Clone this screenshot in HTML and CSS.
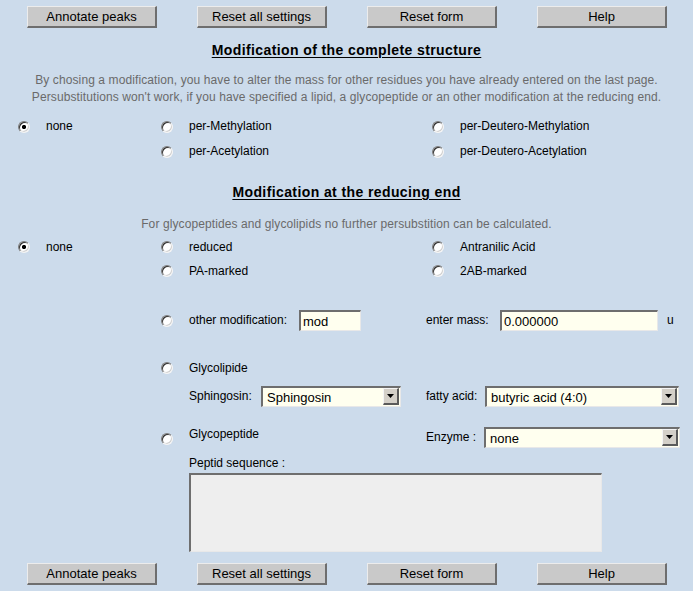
FILE: index.html
```html
<!DOCTYPE html>
<html>
<head>
<meta charset="utf-8">
<link rel="stylesheet" href="styles.css">
</head>
<body>
<div class="page">
  <div class="btnbar">
    <div class="cell"><button class="btn">Annotate peaks</button></div>
    <div class="cell"><button class="btn">Reset all settings</button></div>
    <div class="cell"><button class="btn">Reset form</button></div>
    <div class="cell"><button class="btn">Help</button></div>
  </div>

  <h2 class="title t1">Modification of the complete structure</h2>
  <p class="note n1">By chosing a modification, you have to alter the mass for other residues you have already entered on the last page.<br>Persubstitutions won't work, if you have specified a lipid, a glycopeptide or an other modification at the reducing end.</p>

  <div class="row r25 first1">
    <span class="rc"><input type="radio" name="pers" class="rad" checked></span>
    <span class="lb">none</span>
    <span class="rc"><input type="radio" name="pers" class="rad"></span>
    <span class="lb">per-Methylation</span>
    <span class="rc rc3"><input type="radio" name="pers" class="rad"></span>
    <span class="lb">per-Deutero-Methylation</span>
  </div>
  <div class="row r25">
    <span class="rc c3"><input type="radio" name="pers" class="rad"></span>
    <span class="lb">per-Acetylation</span>
    <span class="rc rc3"><input type="radio" name="pers" class="rad"></span>
    <span class="lb">per-Deutero-Acetylation</span>
  </div>

  <h2 class="title t2">Modification at the reducing end</h2>
  <p class="note n2">For glycopeptides and glycolipids no further persubstition can be calculated.</p>

  <div class="row r24 first2">
    <span class="rc"><input type="radio" name="red" class="rad" checked></span>
    <span class="lb">none</span>
    <span class="rc"><input type="radio" name="red" class="rad"></span>
    <span class="lb">reduced</span>
    <span class="rc rc3"><input type="radio" name="red" class="rad"></span>
    <span class="lb">Antranilic Acid</span>
  </div>
  <div class="row r24">
    <span class="rc c3"><input type="radio" name="red" class="rad"></span>
    <span class="lb">PA-marked</span>
    <span class="rc rc3"><input type="radio" name="red" class="rad"></span>
    <span class="lb">2AB-marked</span>
  </div>

  <div class="row rmod">
    <span class="rc c3"><input type="radio" name="red" class="rad"></span>
    <span class="lb fx"><span class="w-mod">other modification:</span><input class="txt in-mod" type="text" value="mod"></span>
    <span class="lb fx span2"><span class="w-mass">enter mass:</span><input class="txt in-mass" type="text" value="0.000000"><span class="unit">u</span></span>
  </div>

  <div class="row rlip">
    <span class="rc c3"><input type="radio" name="red" class="rad"></span>
    <span class="lb">Glycolipide</span>
  </div>

  <div class="row rsph">
    <span class="lb fx c4"><span class="w-sph">Sphingosin:</span>
      <span class="sel s-sph"><span class="selval">Sphingosin</span><span class="arrow"><svg width="7" height="4" viewBox="0 0 7 4"><path d="M0 0H7L3.5 4Z" fill="#000"/></svg></span></span>
    </span>
    <span class="lb fx span2"><span class="w-fat">fatty acid:</span>
      <span class="sel s-fat"><span class="selval">butyric acid (4:0)</span><span class="arrow"><svg width="7" height="4" viewBox="0 0 7 4"><path d="M0 0H7L3.5 4Z" fill="#000"/></svg></span></span>
    </span>
  </div>

  <div class="row rpep">
    <span class="rc c3 rpep-rc"><input type="radio" name="red" class="rad"></span>
    <span class="lb top">Glycopeptide</span>
    <span class="lb fx span2"><span class="w-enz">Enzyme :</span>
      <span class="sel s-enz"><span class="selval">none</span><span class="arrow"><svg width="7" height="4" viewBox="0 0 7 4"><path d="M0 0H7L3.5 4Z" fill="#000"/></svg></span></span>
    </span>
  </div>

  <div class="row rseq">
    <span class="lb c4 wide">Peptid sequence :</span>
  </div>
  <div class="row rta">
    <span class="c4 wide"><textarea class="ta"></textarea></span>
  </div>

  <div class="btnbar bottom">
    <div class="cell"><button class="btn">Annotate peaks</button></div>
    <div class="cell"><button class="btn">Reset all settings</button></div>
    <div class="cell"><button class="btn">Reset form</button></div>
    <div class="cell"><button class="btn">Help</button></div>
  </div>
</div>
</body>
</html>
```

FILE: styles.css
```css
html, body {
  margin: 0;
  padding: 0;
  background: #ccdbeb;
}
body {
  font-family: "Liberation Sans", Arial, sans-serif;
  font-size: 12px;
  color: #000;
  width: 693px;
  height: 591px;
  overflow: hidden;
}
.page {
  width: 693px;
}
.btnbar {
  display: flex;
  padding-left: 7px;
  padding-top: 6px;
}
.btnbar.bottom {
  padding-top: 11px;
}
.cell {
  width: 170px;
  display: flex;
  justify-content: center;
}
.btn {
  width: 130px;
  height: 22px;
  margin: 0;
  padding: 0;
  font-family: "Liberation Sans", Arial, sans-serif;
  font-size: 13px;
  color: #000;
  background: #c9c9c9;
  border-style: solid;
  border-width: 1px 2px 2px 1px;
  border-color: #ececec #6e6e6e #6e6e6e #ececec;
  line-height: 18px;
}
.title {
  margin: 0;
  text-align: center;
  font-size: 14px;
  font-weight: bold;
  letter-spacing: 0.4px;
  line-height: 16px;
  text-decoration: underline;
  text-underline-offset: 2px;
}
.t1 { margin-top: 14px; }
.t2 { margin-top: 20px; }
.note {
  margin: 0;
  text-align: center;
  color: #6a6a6a;
  font-size: 12px;
  letter-spacing: 0.1px;
  line-height: 17px;
}
.n1 { margin-top: 14px; }
.n2 { margin-top: 16px; }

.row {
  display: grid;
  grid-template-columns: 28px 115px 28px 237px 34px 1fr;
  align-items: center;
  padding-left: 18px;
}
.r25 { height: 25px; }
.r24 { height: 24px; }
.first1 { margin-top: 8px; }
.first2 { margin-top: 2px; }
.rmod { margin-top: 27px; height: 21px; }
.rlip { margin-top: 25px; height: 24px; }
.rsph { margin-top: 6px; height: 21px; }
.rpep { margin-top: 20px; height: 21px; }
.rseq { margin-top: 8px; height: 15px; }
.rta { margin-top: 2px; height: 79px; }

.rc {
  display: flex;
  align-items: center;
  height: 100%;
}
.rc3 { padding-left: 6px; }
.c3 { grid-column: 3; }
.c4 { grid-column: 4; }
.span2 { grid-column: 5 / span 2; }
.wide { grid-column: 4 / span 3; }
.lb {
  line-height: 15px;
  white-space: nowrap;
}
.fx {
  display: flex;
  align-items: center;
}
.top { align-self: start; }
.rpep-rc { padding-top: 2px; }

.rad {
  -webkit-appearance: none;
  appearance: none;
  width: 12px;
  height: 12px;
  margin: 0;
  border-radius: 50%;
  border: 1px solid;
  border-color: #7d7d7d #f4f4f4 #f4f4f4 #7d7d7d;
  box-shadow: inset 1px 1px 0 #303030, inset -1px -1px 0 #d0d0d0;
  background: #fff;
}
.rad:checked {
  background: radial-gradient(circle, #000 0, #000 1.8px, #fff 2.4px);
}

.w-mod { width: 110px; }
.w-mass { width: 74px; }
.w-sph { width: 72px; }
.w-fat { width: 59px; }
.w-enz { width: 58px; }

.txt {
  box-sizing: border-box;
  height: 21px;
  margin: 0;
  padding: 0 2px;
  font-family: "Liberation Sans", Arial, sans-serif;
  font-size: 13px;
  color: #000;
  background: #ffffef;
  border-style: solid;
  border-width: 2px 1px 1px 2px;
  border-color: #6e6e6e #e8e8e8 #e8e8e8 #6e6e6e;
  outline: none;
}
.in-mod { width: 62px; }
.in-mass { width: 158px; }
.unit { margin-left: 9px; }

.sel {
  box-sizing: border-box;
  position: relative;
  height: 21px;
  display: flex;
  align-items: center;
  background: #ffffef;
  border-style: solid;
  border-width: 2px 1px 1px 2px;
  border-color: #6e6e6e #e8e8e8 #e8e8e8 #6e6e6e;
  font-size: 13px;
}
.selval { padding-left: 4px; }
.s-sph { width: 140px; }
.s-fat { width: 194px; }
.s-enz { width: 196px; }
.arrow {
  position: absolute;
  right: 1px;
  top: 0;
  width: 16px;
  height: 17px;
  box-sizing: border-box;
  background: #d4d0c8;
  border-style: solid;
  border-width: 1px 2px 2px 1px;
  border-color: #f4f4f4 #5a5a5a #5a5a5a #f4f4f4;
  display: flex;
  align-items: center;
  justify-content: center;
}
.ta {
  display: block;
  box-sizing: border-box;
  width: 413px;
  height: 79px;
  margin: 0;
  resize: none;
  background: #eeeeee;
  border-style: solid;
  border-width: 2px 1px 1px 2px;
  border-color: #6e6e6e #e8e8e8 #e8e8e8 #6e6e6e;
  outline: none;
}
```
